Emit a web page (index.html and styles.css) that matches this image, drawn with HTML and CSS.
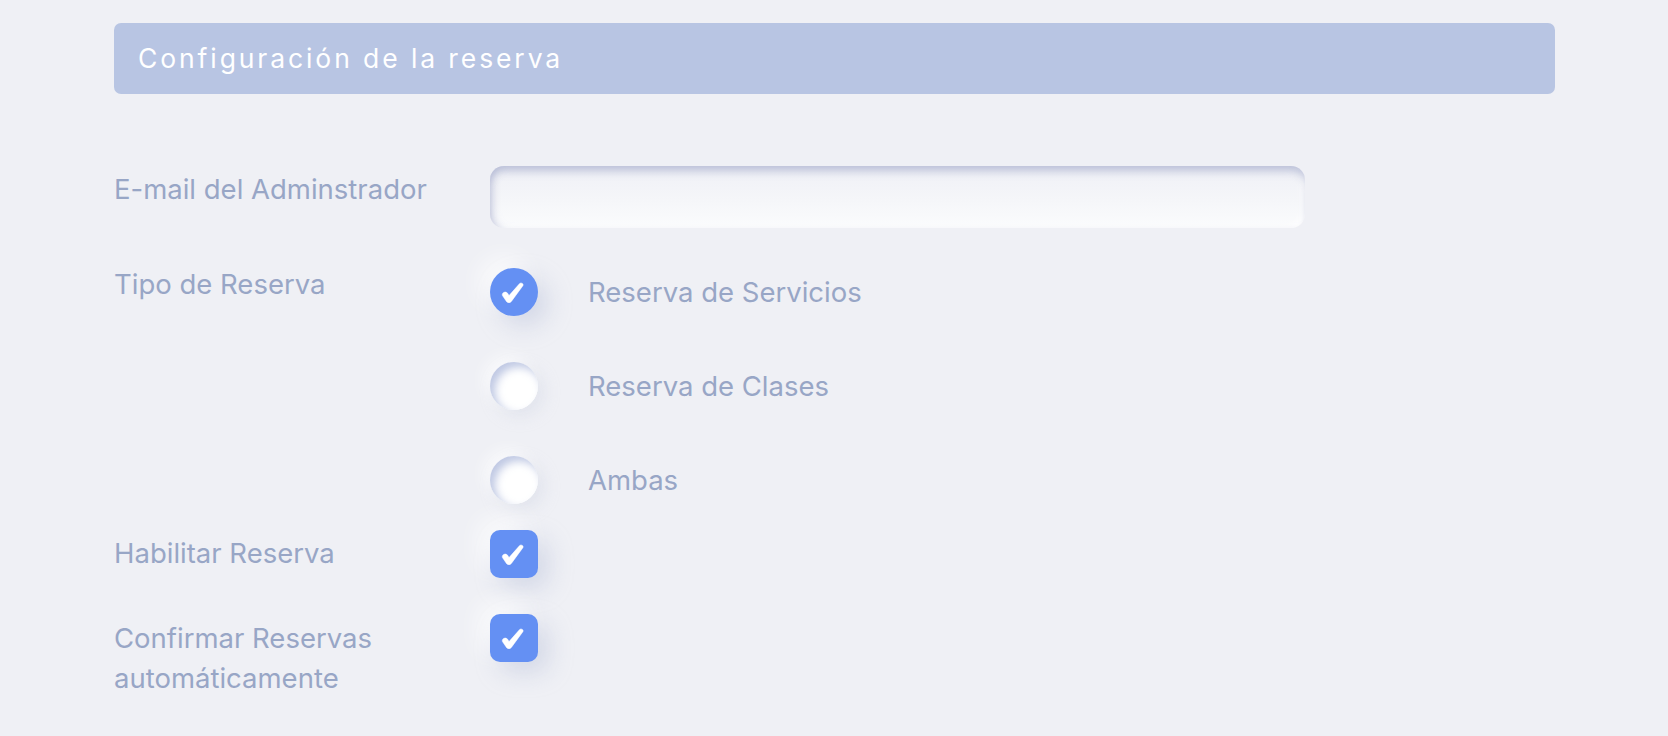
FILE: index.html
```html
<!DOCTYPE html>
<html lang="es">
<head>
<meta charset="utf-8">
<title>Configuración de la reserva</title>
<link rel="stylesheet" href="styles.css">
</head>
<body>
<main class="page">
  <header class="section-header">Configuración de la reserva</header>
  <form class="form">
    <div class="row row-email">
      <label class="label" for="email">E-mail del Adminstrador</label>
      <input class="input" id="email" type="email">
    </div>
    <div class="row row-tipo">
      <div class="label">Tipo de Reserva</div>
      <div class="radio-group">
        <div class="option">
          <span class="radio checked">
            <svg class="tick" viewBox="0 0 24 21" aria-hidden="true"><path d="M1.8 11.2 C3.3 9.5 5.8 9.8 6.8 11.6 L8 13.6 L18.6 1.6 C20 0.1 23 1.8 21.9 3.7 L10.4 19.4 C9 21.2 6.4 21.1 5.3 19.2 L1.6 13.8 C1.1 13 1.2 11.9 1.8 11.2 Z" /></svg>
          </span>
          <span class="option-text">Reserva de Servicios</span>
        </div>
        <div class="option">
          <span class="radio"></span>
          <span class="option-text">Reserva de Clases</span>
        </div>
        <div class="option">
          <span class="radio"></span>
          <span class="option-text">Ambas</span>
        </div>
      </div>
    </div>
    <div class="row row-habilitar">
      <div class="label">Habilitar Reserva</div>
      <span class="checkbox">
        <svg class="tick" viewBox="0 0 24 21" aria-hidden="true"><path d="M1.8 11.2 C3.3 9.5 5.8 9.8 6.8 11.6 L8 13.6 L18.6 1.6 C20 0.1 23 1.8 21.9 3.7 L10.4 19.4 C9 21.2 6.4 21.1 5.3 19.2 L1.6 13.8 C1.1 13 1.2 11.9 1.8 11.2 Z" /></svg>
      </span>
    </div>
    <div class="row row-confirmar">
      <div class="label label-multi">Confirmar Reservas<br>automáticamente</div>
      <span class="checkbox">
        <svg class="tick" viewBox="0 0 24 21" aria-hidden="true"><path d="M1.8 11.2 C3.3 9.5 5.8 9.8 6.8 11.6 L8 13.6 L18.6 1.6 C20 0.1 23 1.8 21.9 3.7 L10.4 19.4 C9 21.2 6.4 21.1 5.3 19.2 L1.6 13.8 C1.1 13 1.2 11.9 1.8 11.2 Z" /></svg>
      </span>
    </div>
  </form>
</main>
</body>
</html>
```

FILE: styles.css
```css
html, body {
  margin: 0;
  padding: 0;
  background: #eff0f5;
}

body {
  font-family: Inter, "Noto Sans", sans-serif;
  color: #98a6c6;
}

.page {
  padding: 23px 113px 0 114px;
}

.section-header {
  height: 71px;
  box-sizing: border-box;
  background: #b8c5e3;
  border-radius: 7px;
  color: #ffffff;
  font-size: 26.5px;
  letter-spacing: 2.9px;
  line-height: 71px;
  padding-left: 24px;
}

.form {
  display: flex;
  flex-direction: column;
}

.row {
  display: grid;
  grid-template-columns: 376px 1fr;
  align-items: start;
}

.label {
  font-size: 27.5px;
  line-height: 40px;
  margin-top: 3px;
}

.label-multi {
  margin-top: 4px;
}

.row-email {
  margin-top: 72px;
}

.input {
  width: 815px;
  height: 62px;
  box-sizing: border-box;
  border: none;
  outline: none;
  border-radius: 14px;
  background: linear-gradient(180deg, #eff0f6 0%, #f5f6f9 55%, #fbfcfd 100%);
  box-shadow:
    inset 0 8px 9px -3px rgba(176, 182, 210, 0.8),
    inset 7px 0 8px -5px rgba(176, 182, 210, 0.65),
    inset -6px -4px 8px -4px rgba(255, 255, 255, 0.9);
}

.row-tipo {
  margin-top: 36px;
}

.row-tipo .label {
  margin-top: 0;
}

.radio-group {
  display: flex;
  flex-direction: column;
  gap: 46px;
  padding-top: 4px;
}

.option {
  display: flex;
  align-items: center;
  gap: 50px;
  height: 48px;
}

.option-text {
  font-size: 27.5px;
  line-height: 40px;
}

.radio {
  width: 48px;
  height: 48px;
  border-radius: 50%;
  flex: none;
  background: #ffffff;
  box-shadow:
    inset 5px 5px 8px rgba(170, 182, 218, 0.75),
    inset -3px -3px 6px rgba(255, 255, 255, 1),
    6px 6px 16px rgba(200, 206, 224, 0.35),
    -6px -6px 16px rgba(255, 255, 255, 0.7);
  display: flex;
  align-items: center;
  justify-content: center;
}

.radio.checked {
  background: #6490f3;
  box-shadow:
    10px 10px 24px rgba(170, 180, 210, 0.4),
    -10px -10px 24px rgba(255, 255, 255, 0.8);
}

.checkbox {
  width: 48px;
  height: 48px;
  border-radius: 10px;
  background: #6490f3;
  box-shadow:
    10px 10px 24px rgba(170, 180, 210, 0.4),
    -10px -10px 24px rgba(255, 255, 255, 0.8);
  display: flex;
  align-items: center;
  justify-content: center;
}

.tick {
  width: 24px;
  height: 21px;
  margin-left: -2px;
  margin-top: 1px;
  fill: #ffffff;
  stroke: #ffffff;
  stroke-width: 0.5;
  stroke-linejoin: round;
}

.row-habilitar {
  margin-top: 26px;
}

.row-confirmar {
  margin-top: 36px;
}
```
